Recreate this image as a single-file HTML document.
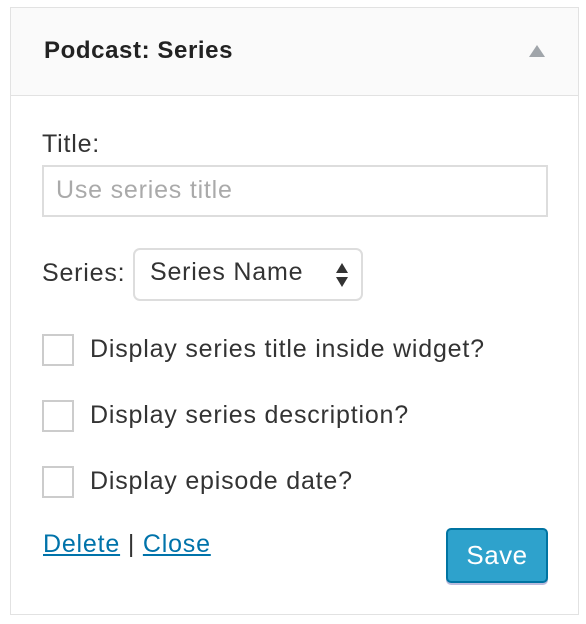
<!DOCTYPE html>
<html><head><style>
body{margin:0;width:586px;height:624px;background:#fff;font-family:"Liberation Sans",sans-serif;color:#333;position:relative;overflow:hidden}
.box{position:absolute;left:10px;top:7px;width:567px;height:606px;border:1px solid #e2e2e2;background:#fff}
.hd{position:absolute;left:0;top:0;right:0;height:87px;background:#fafafa;border-bottom:1px solid #e2e2e2}
.hd h3{position:absolute;left:33px;top:29px;margin:0;font-size:24px;font-weight:bold;color:#222;letter-spacing:0.6px}
.tri{position:absolute;right:33px;top:37px;width:0;height:0;border-left:8px solid transparent;border-right:8px solid transparent;border-bottom:12px solid #a0a5aa}
.a{position:absolute;font-size:25px;white-space:nowrap;letter-spacing:0.8px}
.inp{position:absolute;left:42px;top:165px;border:2px solid #ddd;box-sizing:border-box;width:506px;height:52px}
.sel{position:absolute;left:133px;top:248px;width:230px;height:53px;border:2px solid #ddd;border-radius:7px;box-sizing:border-box}
.cb{position:absolute;left:42px;width:32px;height:32px;border:2px solid #ccc;box-sizing:border-box}
a{color:#0073aa;text-decoration:underline}
.save{position:absolute;left:446px;top:528px;width:102px;height:55px;background:#2ea2cc;border:2px solid #0074a2;border-radius:5px;box-sizing:border-box;color:#fff;font-size:26px;letter-spacing:0.5px;text-align:center;line-height:50px;box-shadow:0 2px 0 #bbd}
</style></head><body>
<div class="box"><div class="hd"><h3>Podcast: Series</h3><div class="tri"></div></div></div>
<div class="a" style="left:42px;top:130px">Title:</div>
<div class="inp"></div>
<div class="a" style="left:56px;top:176px;color:#aaa">Use series title</div>
<div class="a" style="left:42px;top:259px">Series:</div>
<div class="sel"></div>
<div class="a" style="left:150px;top:258px">Series Name</div>
<svg style="position:absolute;left:335px;top:262px" width="14" height="26"><path d="M7 1L13 11H1Z M7 25L13 15H1Z" fill="#333"/></svg>
<div class="cb" style="top:334px"></div><div class="a" style="left:90px;top:335px">Display series title inside widget?</div>
<div class="cb" style="top:400px"></div><div class="a" style="left:90px;top:401px">Display series description?</div>
<div class="cb" style="top:466px"></div><div class="a" style="left:90px;top:467px">Display episode date?</div>
<div class="a" style="left:43px;top:530px"><a>Delete</a> | <a>Close</a></div>
<div class="save">Save</div>
</body></html>
